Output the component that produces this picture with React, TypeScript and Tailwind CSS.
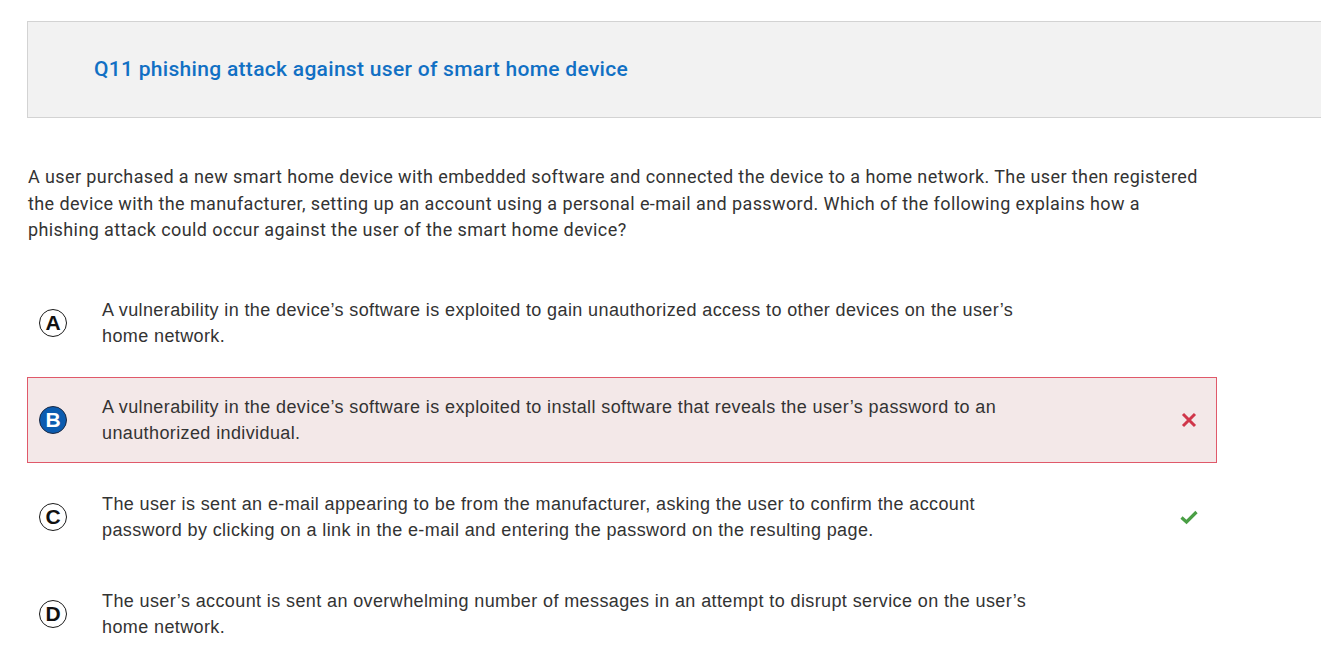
import React from "react";

const options = [
  {
    letter: "A",
    text: "A vulnerability in the device\u2019s software is exploited to gain unauthorized access to other devices on the user\u2019s home network.",
    state: "none",
  },
  {
    letter: "B",
    text: "A vulnerability in the device\u2019s software is exploited to install software that reveals the user\u2019s password to an unauthorized individual.",
    state: "wrong",
  },
  {
    letter: "C",
    text: "The user is sent an e-mail appearing to be from the manufacturer, asking the user to confirm the account password by clicking on a link in the e-mail and entering the password on the resulting page.",
    state: "correct",
  },
  {
    letter: "D",
    text: "The user\u2019s account is sent an overwhelming number of messages in an attempt to disrupt service on the user\u2019s home network.",
    state: "none",
  },
];

function Cross() {
  return (
    <svg width="16" height="16" viewBox="0 0 16 16">
      <path d="M2 2 L14 14 M14 2 L2 14" stroke="#d0364a" strokeWidth="3" strokeLinecap="butt" fill="none" />
    </svg>
  );
}

function Check() {
  return (
    <svg width="18" height="16" viewBox="0 0 18 16">
      <path d="M1.5 8.5 L6.5 13 L16.5 3" stroke="#4a9f45" strokeWidth="3.2" fill="none" />
    </svg>
  );
}

export default function App() {
  return (
    <div className="w-full overflow-x-hidden bg-white pl-[27px] pt-[21px] pb-[20px]">
      <div className="flex h-[97px] w-[1320px] items-center border border-[#d3d3d3] bg-[#f2f2f2] pl-[66px]">
        <h1 className="font-['Roboto',sans-serif] text-[21px] font-medium tracking-[0.3px] text-[#1170c4]">
          Q11 phishing attack against user of smart home device
        </h1>
      </div>

      <p className="mt-[46px] w-[1178px] pl-[1px] font-['Roboto',sans-serif] text-[18px] leading-[26.5px] tracking-[0.4px] text-[#333333]">
        A user purchased a new smart home device with embedded software and connected the device to a home network. The user then registered the device with the manufacturer, setting up an account using a personal e-mail and password. Which of the following explains how a phishing attack could occur against the user of the smart home device?
      </p>

      <div className="mt-[36px] flex w-[1190px] flex-col gap-[11px]">
        {options.map((o) => {
          const selected = o.state === "wrong";
          return (
            <div
              key={o.letter}
              className={
                selected
                  ? "flex h-[86px] items-center border border-[#e0596a] bg-[#f3e8e8] pl-[11px] pr-[15px]"
                  : "flex h-[86px] items-center border border-transparent pl-[11px] pr-[15px]"
              }
            >
              {selected ? (
                <div className="flex h-[28px] w-[28px] shrink-0 items-center justify-center rounded-full border-[1.5px] border-[#1b2a44] bg-[#0b5cb0] font-['Liberation_Sans',Arial,sans-serif] text-[21px] font-bold leading-none text-white">
                  {o.letter}
                </div>
              ) : (
                <div className="flex h-[28px] w-[28px] shrink-0 items-center justify-center rounded-full border-[1.5px] border-[#1a1a1a] bg-white font-['Liberation_Sans',Arial,sans-serif] text-[21px] font-bold leading-none text-[#111111]">
                  {o.letter}
                </div>
              )}
              <div className="ml-[35px] w-[945px] font-['Liberation_Sans',Arial,sans-serif] text-[18px] leading-[26px] tracking-[0.39px] text-[#333333]">
                {o.text}
              </div>
              <div className="ml-auto flex w-[24px] items-center justify-center">
                {o.state === "wrong" && <Cross />}
                {o.state === "correct" && <Check />}
              </div>
            </div>
          );
        })}
      </div>
    </div>
  );
}
